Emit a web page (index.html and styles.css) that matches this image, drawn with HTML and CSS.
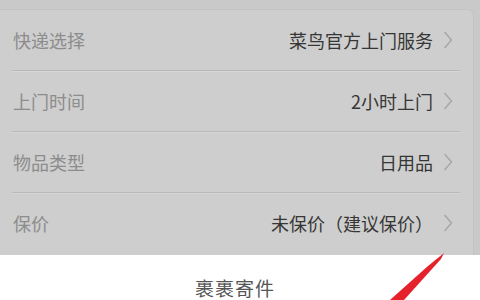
FILE: index.html
```html
<!DOCTYPE html>
<html lang="zh-CN">
	<head>
		<meta charset="UTF-8" />
		<meta name="viewport" content="width=device-width, initial-scale=1.0" />
		<title>裹裹寄件</title>
		<link rel="stylesheet" href="styles.css">
	</head>
	<body>
		<div class="screen">
			<div class="mask">
				<div class="card">
					<div class="row">
						<span class="label">快递选择</span>
						<span class="value">菜鸟官方上门服务</span>
						<svg class="chevron" viewBox="0 0 10 18"><path d="M1.5 1 L8.5 9 L1.5 17" /></svg>
					</div>
					<div class="row">
						<span class="label">上门时间</span>
						<span class="value">2小时上门</span>
						<svg class="chevron" viewBox="0 0 10 18"><path d="M1.5 1 L8.5 9 L1.5 17" /></svg>
					</div>
					<div class="row">
						<span class="label">物品类型</span>
						<span class="value">日用品</span>
						<svg class="chevron" viewBox="0 0 10 18"><path d="M1.5 1 L8.5 9 L1.5 17" /></svg>
					</div>
					<div class="row">
						<span class="label">保价</span>
						<span class="value">未保价（建议保价）</span>
						<svg class="chevron" viewBox="0 0 10 18"><path d="M1.5 1 L8.5 9 L1.5 17" /></svg>
					</div>
				</div>
			</div>
			<div class="sheet">
				<span class="sheet-title">裹裹寄件</span>
			</div>
			<svg class="pointer" viewBox="0 0 480 300">
				<polygon points="444,253 441,259 404,300 390,300 428,266" />
			</svg>
		</div>
	</body>
</html>
```

FILE: styles.css
```css
body {
	margin: 0;
	font-family: "Noto Sans CJK SC", "Noto Sans", sans-serif;
	background-color: #fff;
}
.screen {
	position: relative;
	width: 480px;
	height: 300px;
	overflow: hidden;
}
.mask {
	background-color: #c9c9c9;
	height: 255px;
	padding-top: 9px;
	box-sizing: border-box;
}
.card {
	background-color: #cecece;
	border-top: 1px solid #c3c3c3;
	border-right: 1px solid #c3c3c3;
	border-top-right-radius: 6px;
	margin-right: 6px;
	height: 100%;
	box-sizing: border-box;
}
.row {
	display: flex;
	align-items: center;
	height: 60px;
	margin: 0 13px 0 12px;
	padding: 0 7px 0 1px;
	border-bottom: 1px solid #b9b9b9;
	box-shadow: 0 1px 0 #d6d6d6;
}
.row:last-child {
	border-bottom: none;
	box-shadow: none;
}
.label {
	font-size: 18px;
	color: #8c8c8c;
	flex: 1;
}
.value {
	font-size: 18px;
	color: #363636;
}
.chevron {
	width: 10px;
	height: 18px;
	margin-left: 10px;
	fill: none;
	stroke: #a6a6a6;
	stroke-width: 1.4;
}
.sheet {
	display: flex;
	justify-content: center;
	align-items: center;
	height: 45px;
	padding: 20px 10px 0 0;
	box-sizing: border-box;
}
.sheet-title {
	font-size: 19px;
	color: #555;
	letter-spacing: 1px;
}
.pointer {
	position: absolute;
	left: 0;
	top: 0;
	width: 480px;
	height: 300px;
	fill: #e5212b;
}
```
